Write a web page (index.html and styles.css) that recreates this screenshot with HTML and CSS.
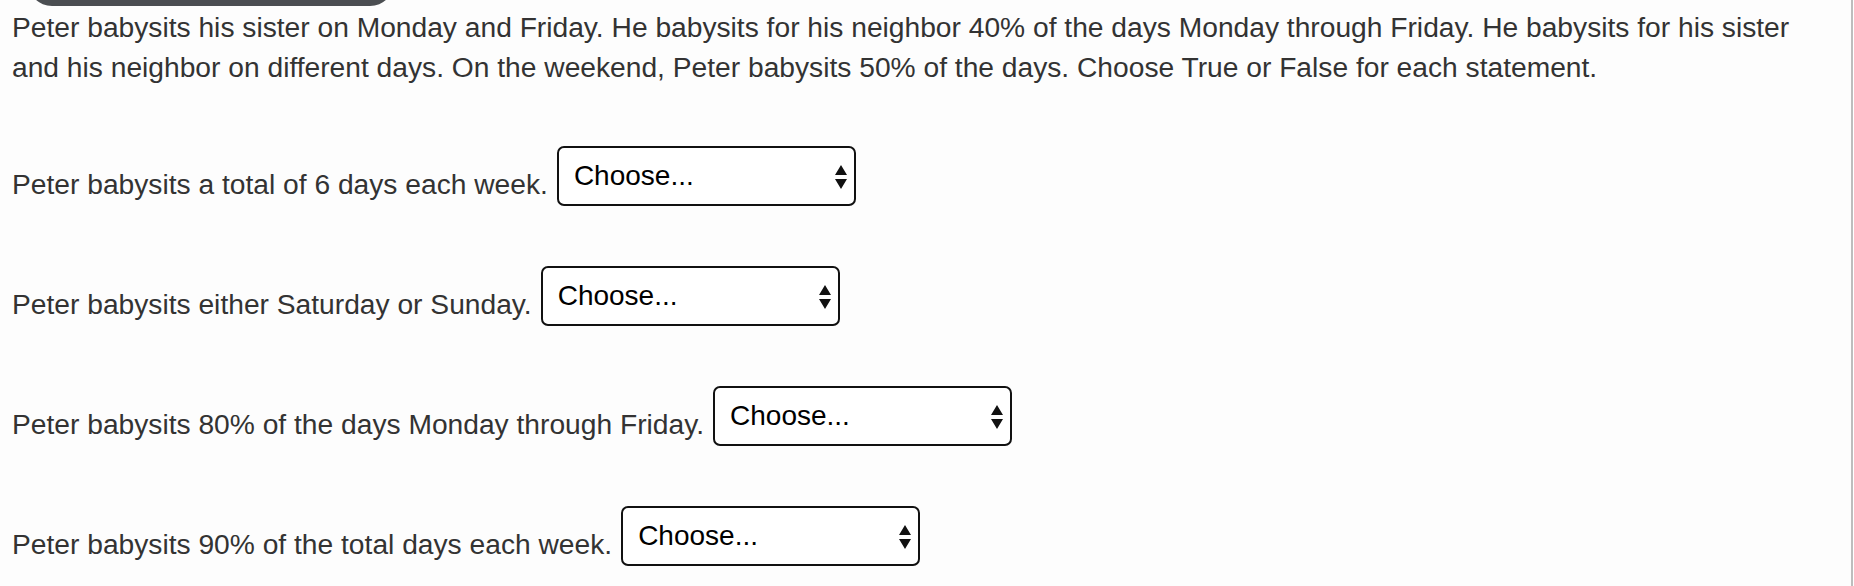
FILE: index.html
```html
<!DOCTYPE html>
<html lang="en">
<head>
<meta charset="utf-8">
<title>Peter babysits</title>
<link rel="stylesheet" href="styles.css">
</head>
<body>
<div class="page">
  <div class="tip"></div>
  <p class="intro">Peter babysits his sister on Monday and Friday. He babysits for his neighbor 40% of the days Monday through Friday. He babysits for his sister and his neighbor on different days. On the weekend, Peter babysits 50% of the days. Choose True or False for each statement.</p>

  <div class="row">
    <span class="label">Peter babysits a total of 6 days each week.</span>
    <div class="select"><span class="value">Choose...</span><svg class="arrows" width="12" height="24" viewBox="0 0 12 24"><path d="M6 0 L12 10 L0 10 Z M0 14 L12 14 L6 24 Z" fill="#111"/></svg></div>
  </div>

  <div class="row">
    <span class="label">Peter babysits either Saturday or Sunday.</span>
    <div class="select"><span class="value">Choose...</span><svg class="arrows" width="12" height="24" viewBox="0 0 12 24"><path d="M6 0 L12 10 L0 10 Z M0 14 L12 14 L6 24 Z" fill="#111"/></svg></div>
  </div>

  <div class="row">
    <span class="label">Peter babysits 80% of the days Monday through Friday.</span>
    <div class="select"><span class="value">Choose...</span><svg class="arrows" width="12" height="24" viewBox="0 0 12 24"><path d="M6 0 L12 10 L0 10 Z M0 14 L12 14 L6 24 Z" fill="#111"/></svg></div>
  </div>

  <div class="row">
    <span class="label">Peter babysits 90% of the total days each week.</span>
    <div class="select"><span class="value">Choose...</span><svg class="arrows" width="12" height="24" viewBox="0 0 12 24"><path d="M6 0 L12 10 L0 10 Z M0 14 L12 14 L6 24 Z" fill="#111"/></svg></div>
  </div>
</div>
</body>
</html>
```

FILE: styles.css
```css
html, body {
  margin: 0;
  padding: 0;
  background: #ffffff;
}

body {
  font-family: "Liberation Sans", Arial, Helvetica, sans-serif;
  color: #333333;
}

.page {
  position: relative;
  box-sizing: border-box;
  width: 1853px;
  height: 586px;
  overflow: hidden;
  padding: 7px 0 0 12px;
  border-right: 2px solid #bdbdbd;
  background: #fdfdfd;
}

.tip {
  position: absolute;
  left: 28px;
  top: -30px;
  width: 366px;
  height: 36px;
  border-radius: 0 0 24px 24px;
  background: #4b4e52;
}

.intro {
  margin: 0;
  max-width: 1815px;
  font-size: 28.2px;
  line-height: 40px;
}

.row {
  display: flex;
  align-items: flex-end;
  gap: 9px;
  margin-top: 60px;
}

.intro + .row {
  margin-top: 59px;
}

.label {
  font-size: 28.2px;
  line-height: 40px;
  margin-bottom: 2px;
}

.select {
  box-sizing: border-box;
  width: 299px;
  height: 60px;
  border: 2px solid #111111;
  border-radius: 7px;
  background: #ffffff;
  display: flex;
  align-items: flex-start;
  justify-content: space-between;
  padding: 13px 7px 0 15px;
  color: #000000;
}

.value {
  font-size: 28px;
  line-height: 30px;
}

.arrows {
  margin-top: 4px;
  flex: none;
}
```
